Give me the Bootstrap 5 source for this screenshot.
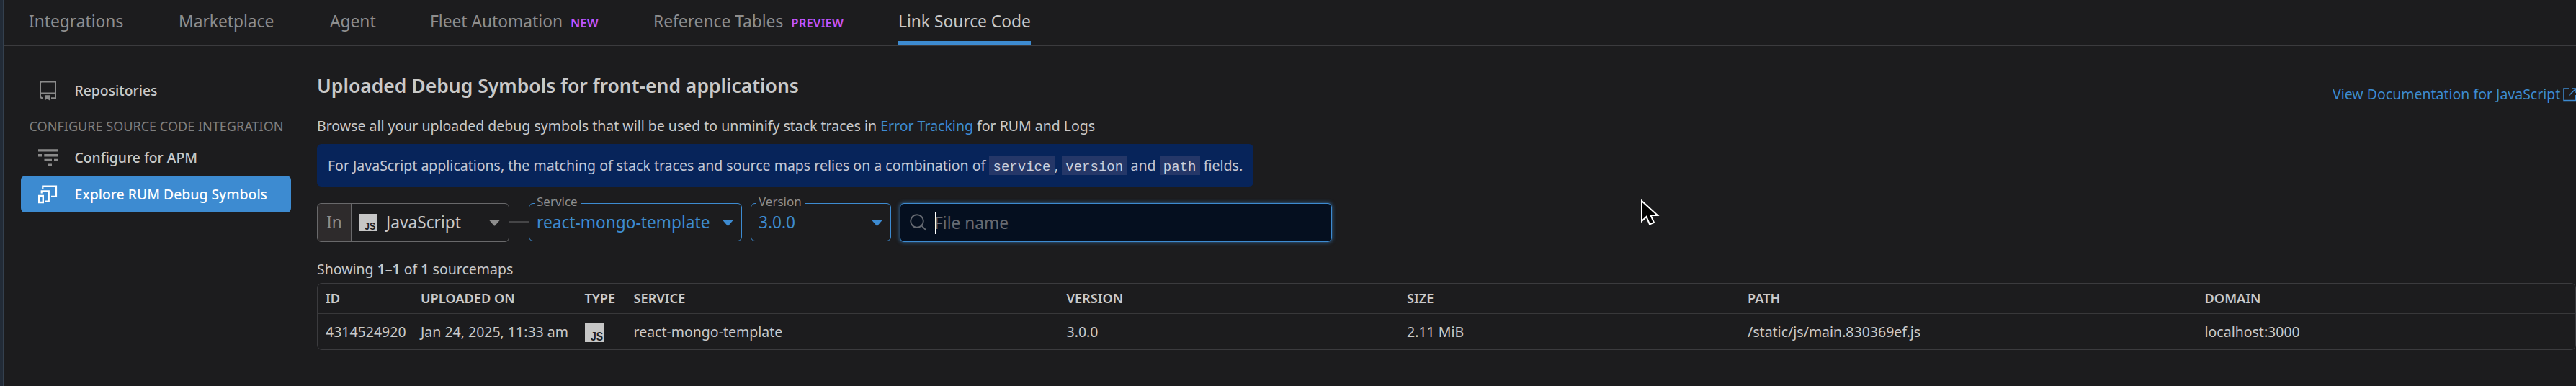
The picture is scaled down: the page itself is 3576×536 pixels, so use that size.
<!DOCTYPE html>
<html lang="en" data-bs-theme="dark">
<head>
<meta charset="utf-8">
<title>Link Source Code</title>
<link href="https://cdn.jsdelivr.net/npm/bootstrap@5.3.0/dist/css/bootstrap.min.css" rel="stylesheet">
<style>
body{background:#1c1c1e;color:#c9c9c9;font-family:"Noto Sans",sans-serif;font-size:19.5px;line-height:28px;height:536px;overflow:hidden}
a{color:#3d8bd1;text-decoration:none}
svg{display:block;flex:none}
.rail{width:5px;background:#222b37;border-right:1px solid #34404e;flex:none}
.tabs{display:grid;grid-template-columns:208px 210px 139px 310px 340px auto;justify-content:start;height:64px;padding-left:35px;border-bottom:1px solid #3b3b3e;font-size:22.75px}
.tabs .nav-link{padding:0;line-height:60px;color:#8e8e8e;height:63px;white-space:nowrap}
.tabs .nav-link.active{color:#c9c9c9;border-bottom:6px solid #3d8bd1}
.tag{font-size:16.8px;font-weight:600;color:#c054ff;margin-left:11px}
.side{width:375px;margin:36px 36px 0 24px;flex:none}
.side .nav-link{height:51px;padding:1px 0 0 22px;color:#c9c9c9;font-weight:500;font-size:19.35px;display:flex;align-items:center;border-radius:6px}
.side .nav-link svg{margin:-1px 20.5px 0 0;color:#8a8a8a}
.side .nav-link.active{background:#3d8bd1;color:#fff}
.side .nav-link.active svg{color:#fff}
.side-head{height:42px;padding:10px 0 0 11.5px;font-size:18.07px;color:#808080;white-space:nowrap}
.head-row{height:73px}
h1{font-size:26.5px;font-weight:600;line-height:36px;margin:37px 0 0;color:#c9c9c9}
.note{background:#07245a;color:#c4c8d6;width:1300px;height:59px;border-radius:6px;padding-left:15px;line-height:59px;white-space:nowrap}
.note code{display:inline-block;line-height:33px;height:27px;background:#253768;color:#ccd0dd;font-family:"Liberation Mono",monospace;font-size:19px;padding:0 5.3px}
.ctl{height:54px;border:1px solid #69696b;border-radius:6px;font-size:22.7px;color:#c9c9c9}
.blue{height:53px;border-color:#3d8bd1;color:#3d8bd1;position:relative;padding:1px 11px 0 10px}
.blue label{position:absolute;left:7px;top:-15px;line-height:24px;padding:0 4px 0 3px;font-size:17px;color:#8e8e8e;background:#1c1c1e}
.in-part{width:47px;background:#2e2b2c;border-right:1px solid #69696b;border-radius:5px 0 0 5px;color:#8e8e8e}
.link-line{width:27px;height:3px;background:#454547}
.find{width:600px;margin-left:12px;border-color:#3d8bd1;background:#050f1f;box-shadow:0 0 5px 1px rgba(61,139,209,.55);color:#666a72;padding-left:13px}
.caret-bar{width:2px;height:31px;background:#fff;margin-left:11px;margin-right:-3px}
.grid-box{border:1px solid #3b3b3e;border-radius:7px;height:93px;overflow:hidden}
.grid-box table{table-layout:fixed;width:100%;border-collapse:separate;border-spacing:0}
.grid-box th,.grid-box td{padding:0 0 0 11px;white-space:nowrap;vertical-align:middle}
.grid-box th{height:42px;border-bottom:2px solid #38383a;font-size:18.2px;font-weight:600}
.grid-box td{height:50px}
.pointer{position:absolute;left:2276px;top:274px}
.doc{white-space:nowrap;height:28px;margin-top:53px;width:338px;overflow:hidden}
</style>
</head>
<body class="d-flex">
<svg width="0" height="0" class="position-absolute"><defs>
<symbol id="js" viewBox="0 0 24 24"><path fill="#c6c6c6" d="M0 0h24v24H0z"/><text x="7" y="22" textLength="15.3" lengthAdjust="spacingAndGlyphs" font-family="Liberation Sans,sans-serif" font-weight="700" font-size="15" fill="#1c1c1e">JS</text></symbol>
<symbol id="down" viewBox="0 0 15 9"><path fill="currentColor" d="M1 0h13q1.400 0 .4 1.300L8.500 8q-1 1.200-2 0L.6 1.300Q-.4 0 1 0z"/></symbol>
</defs></svg>
<div class="rail"></div>
<div class="flex-grow-1">
  <nav class="nav tabs">
    <a class="nav-link" href="#">Integrations</a>
    <a class="nav-link" href="#">Marketplace</a>
    <a class="nav-link" href="#">Agent</a>
    <a class="nav-link" href="#">Fleet Automation<span class="tag">NEW</span></a>
    <a class="nav-link" href="#">Reference Tables<span class="tag">PREVIEW</span></a>
    <a class="nav-link active" href="#">Link Source Code</a>
  </nav>
  <div class="d-flex">
    <aside class="side">
      <a class="nav-link" href="#"><svg width="32" height="32" viewBox="0 0 32 32" fill="none" stroke="currentColor" stroke-width="2"><path d="M9 26.200H8q-3 0-3-3V5.500q0-2 2-2h19v22.700h-6M5 19.500h21"/><path fill="currentColor" stroke="none" d="M11 22.200h7v7.300l-3.500-2.200-3.500 2.200z"/></svg>Repositories</a>
      <div class="side-head">CONFIGURE SOURCE CODE INTEGRATION</div>
      <a class="nav-link" href="#"><svg width="32" height="32" viewBox="0 0 32 32" fill="currentColor"><path d="M2 4.200h27v3.400H2zM2 11h5v3.400H2zM10.300 11H29v3.400H10.300zM10.500 17.700H21v3.400H10.500zM24 17.700h5v3.400h-5zM15 24.500h6v3.400h-6z"/></svg>Configure for APM</a>
      <a class="nav-link active" href="#"><svg width="32" height="32" viewBox="0 0 32 32" fill="none" stroke="currentColor" stroke-width="2.200"><path d="M8.300 8V4.600H27v14.200h-7M6.700 14.500v-3.200h10.100v14.300H12"/><path stroke-width="2.400" d="M3.200 18h5.600v9H3.200z"/></svg>Explore RUM Debug Symbols</a>
    </aside>
    <main class="flex-grow-1">
      <div class="head-row d-flex justify-content-between">
        <h1>Uploaded Debug Symbols for front-end applications</h1>
        <a class="doc d-flex align-items-center" href="#">View Documentation for JavaScript<svg class="ms-1" width="19" height="19" viewBox="0 0 19 19" fill="none" stroke="currentColor" stroke-width="1.500"><path d="M8 1H1v16.500h16.500V10M12 1h6v6M17.500 1.500 8.500 10.500"/></svg></a>
      </div>
      <div style="margin-top:24px">Browse all your uploaded debug symbols that will be used to unminify stack traces in <a href="#">Error Tracking</a> for RUM and Logs</div>
      <div class="note" style="margin-top:11px">For JavaScript applications, the matching of stack traces and source maps relies on a combination of <code>service</code>, <code>version</code> and <code>path</code> fields.</div>
      <div class="d-flex align-items-start" style="margin-top:23px">
        <div class="ctl d-flex align-items-stretch" style="width:267px">
          <div class="in-part d-flex align-items-center justify-content-center">In</div>
          <div class="d-flex align-items-center flex-grow-1" style="padding:0 12px 0 11px"><svg width="24" height="24"><use href="#js"/></svg><span style="margin-left:13px">JavaScript</span><svg class="ms-auto" width="15" height="9" style="color:#8e8e8e"><use href="#down"/></svg></div>
        </div>
        <div class="link-line" style="margin-top:25px"></div>
        <div class="ctl blue d-flex align-items-center" style="width:296px"><label>Service</label>react-mongo-template<svg class="ms-auto" width="15" height="9"><use href="#down"/></svg></div>
        <div class="ctl blue d-flex align-items-center" style="width:195px;margin-left:12px"><label>Version</label>3.0.0<svg class="ms-auto" width="15" height="9"><use href="#down"/></svg></div>
        <div class="ctl find d-flex align-items-center"><svg width="24" height="24" viewBox="0 0 24 24" fill="none" stroke="currentColor" stroke-width="1.900"><circle cx="10" cy="10" r="8.800"/><path d="m16.300 16.300 6.500 6.500"/></svg><span class="caret-bar"></span><span style="padding-top:2px">File name</span></div>
      </div>
      <div style="margin-top:24px">Showing <b class="fw-semibold">1–1</b> of <b class="fw-semibold">1</b> sourcemaps</div>
      <div class="grid-box" style="margin-top:5px">
        <table>
          <colgroup><col style="width:132px"><col style="width:227.500px"><col style="width:68px"><col style="width:601px"><col style="width:472.500px"><col style="width:473px"><col style="width:634.500px"><col></colgroup>
          <thead><tr><th>ID</th><th>UPLOADED ON</th><th>TYPE</th><th>SERVICE</th><th>VERSION</th><th>SIZE</th><th>PATH</th><th>DOMAIN</th></tr></thead>
          <tbody><tr><td>4314524920</td><td>Jan 24, 2025, 11:33 am</td><td><svg width="27" height="27"><use href="#js"/></svg></td><td>react-mongo-template</td><td>3.0.0</td><td>2.11 MiB</td><td>/static/js/main.830369ef.js</td><td>localhost:3000</td></tr></tbody>
        </table>
      </div>
    </main>
  </div>
</div>
<svg class="pointer" width="30" height="42" viewBox="0 0 30 42"><path d="M3 5v28l6.500-6 4.500 10.500 6-2.500-4.500-10H25z" fill="#000" stroke="#fff" stroke-width="2"/></svg>
<script src="https://cdn.jsdelivr.net/npm/bootstrap@5.3.0/dist/js/bootstrap.bundle.min.js"></script>
</body>
</html>
